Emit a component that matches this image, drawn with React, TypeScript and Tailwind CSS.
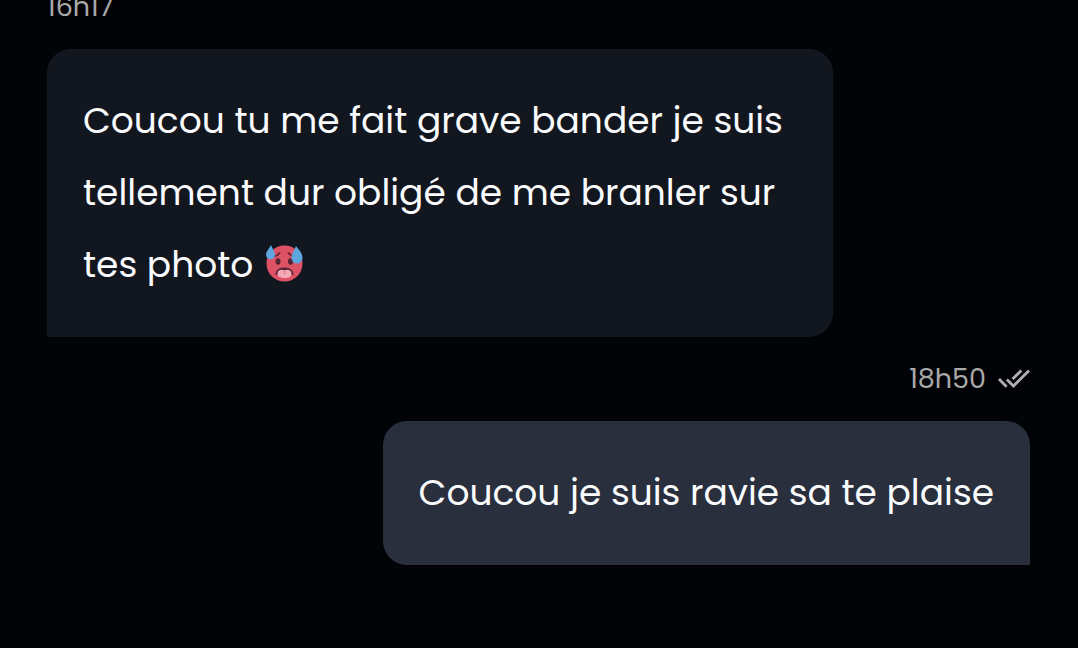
import type { ReactNode } from "react";

type Side = "left" | "right";

function DoubleCheck() {
  return (
    <svg
      role="img"
      aria-label="Lu"
      viewBox="0 0 32 22"
      className="h-[22px] w-8 shrink-0"
      fill="none"
      stroke="#b0b0b0"
      strokeWidth="2.8"
    >
      <path d="M1 11 L8.6 18.8" />
      <path d="M8.9 11.6 L15.4 18 L31 2.500" />
      <path d="M14.600 11 L23.300 2.500" />
    </svg>
  );
}

function HotFace() {
  return (
    <svg
      role="img"
      aria-label="🥵"
      viewBox="0 0 38 38"
      className="ml-0.5 inline-block size-[38px] align-[-5px]"
    >
      <circle cx="19.500" cy="19.500" r="18" fill="#dd5265" />
      <path d="M8.500 12.500 Q12.500 11.800 14.500 9" fill="none" stroke="#6b2635" strokeWidth="1.800" strokeLinecap="round" />
      <path d="M29.500 12.500 Q25.500 11.800 23.500 9" fill="none" stroke="#6b2635" strokeWidth="1.800" strokeLinecap="round" />
      <ellipse cx="13" cy="17.500" rx="2.500" ry="3.300" fill="#552331" />
      <ellipse cx="25.500" cy="17.500" rx="2.500" ry="3.300" fill="#552331" />
      <path d="M10.500 31 C10.500 26 14 23.500 19.500 23.500 S28.500 26 28.500 31 Q24 29.500 19.500 29.500 T10.500 31Z" fill="#552331" />
      <path d="M12.500 29.500 C12.500 25.500 16.500 25 19.500 26.200 C22.500 25 26.500 25.500 26.500 29.500 C26.500 33.500 23 34 19.500 34 S12.500 33.500 12.500 29.500Z" fill="#f3a9b8" />
      <path d="M19.500 26.500 V30" stroke="#d87890" strokeWidth="1.200" />
      <path d="M6 1 C4 5 1 7.500 1 11 A4.500 4.200 0 0 0 10 11 C10 7.500 7.500 5 6 1Z" fill="#5da6e0" />
      <path d="M31 2 C29.500 6.500 26.500 9 26.500 14 A5.500 5.500 0 0 0 37.500 14 C37.500 9 34 6 31 2Z" fill="#5da6e0" />
    </svg>
  );
}

function Stamp({ time, side, read }: { time: string; side: Side; read?: boolean }) {
  return (
    <div
      className={`flex h-[84px] items-center gap-3 text-[27px] leading-[34px] text-[#a9a9a9] ${
        side === "right" ? "justify-end" : "justify-start"
      }`}
    >
      <time>{time}</time>
      {read && <DoubleCheck />}
    </div>
  );
}

function Bubble({ side, children }: { side: Side; children: ReactNode }) {
  return (
    <p
      className={`max-w-[80%] rounded-3xl p-9 text-[36px] leading-[72px] text-[#fafbfd] ${
        side === "right"
          ? "self-end rounded-br-none bg-[#292f3d]"
          : "self-start rounded-bl-none bg-[#12171f]"
      }`}
    >
      {children}
    </p>
  );
}

export default function App() {
  return (
    <main className="flex h-screen flex-col overflow-hidden bg-[#020307] pl-[47px] pr-12 font-['Poppins','Inter',sans-serif]">
      <div className="-mt-[35px] flex flex-col">
        <Stamp time="16h17" side="left" />
        <Bubble side="left">
          Coucou tu me fait grave bander je suis tellement dur obligé de me branler sur tes photo <HotFace />
        </Bubble>
        <Stamp time="18h50" side="right" read />
        <Bubble side="right">Coucou je suis ravie sa te plaise</Bubble>
      </div>
    </main>
  );
}
